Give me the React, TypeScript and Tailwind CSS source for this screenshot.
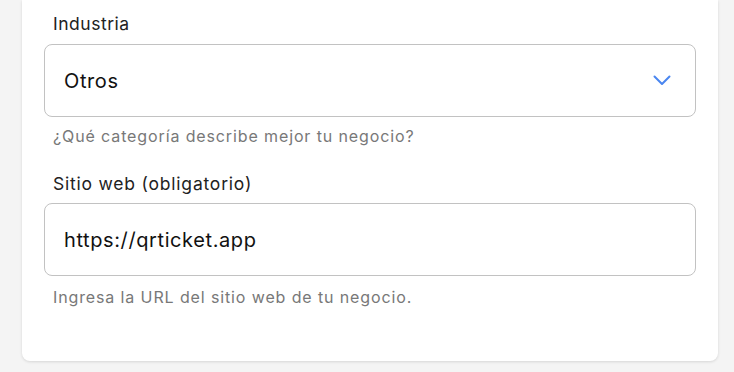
export default function App() {
  return (
    <div
      className="min-h-screen bg-[#f4f4f4] pl-[22px] pr-[16px] pb-[11px]"
      style={{ fontFamily: "Inter, 'Open Sans', sans-serif" }}
    >
      <div className="bg-white rounded-b-[8px] shadow-[0_1px_3px_rgba(0,0,0,0.12)] px-[22px] pt-[12px] pb-[54px]">
        {/* Industria */}
        <label className="block pl-[9px] text-[17.5px] leading-[24px] tracking-[0.03em] text-[#222]">Industria</label>
        <div className="mt-[8px] h-[73px] border border-[#c2c2c2] rounded-[8px] flex items-center justify-between pl-[19px] pr-[24px]">
          <span className="text-[20px] tracking-[0.03em] text-[#111]">Otros</span>
          <svg width="18" height="11" viewBox="0 0 18 11" fill="none">
            <path d="M1.5 1.5L9 9L16.5 1.5" stroke="#4a86f0" strokeWidth="2" strokeLinecap="round" strokeLinejoin="round" />
          </svg>
        </div>
        <p className="mt-[9px] pl-[9px] text-[16px] leading-[20px] tracking-[0.055em] text-[#787878]">
          ¿Qué categoría describe mejor tu negocio?
        </p>

        {/* Sitio web */}
        <label className="block mt-[26px] pl-[9px] text-[17.5px] leading-[24px] tracking-[0.045em] text-[#222]">
          Sitio web (obligatorio)
        </label>
        <div className="mt-[7px] h-[73px] border border-[#c2c2c2] rounded-[8px] flex items-center pl-[19px]">
          <span className="text-[20px] tracking-[0.03em] text-[#111]">https://qrticket.app</span>
        </div>
        <p className="mt-[11px] pl-[9px] text-[16px] leading-[20px] tracking-[0.055em] text-[#787878]">
          Ingresa la URL del sitio web de tu negocio.
        </p>
      </div>
    </div>
  );
}
